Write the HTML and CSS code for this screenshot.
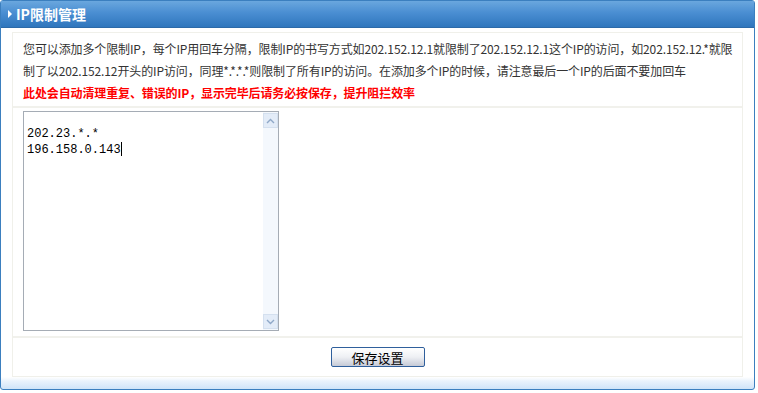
FILE: index.html
```html
<!DOCTYPE html>
<html lang="zh-CN">
<head>
    <meta charset="UTF-8">
    <title>IP限制管理</title>
    <link rel="stylesheet" href="styles.css">
</head>
<body>
    <div class="panel">
        <div class="panel-head"><span class="arrow"></span>IP限制管理</div>
        <div class="panel-body">
            <div class="form">
                <div class="row intro">
                    <p>您可以添加多个限制IP，每个IP用回车分隔，限制IP的书写方式如202.152.12.1就限制了202.152.12.1这个IP的访问，如202.152.12.*就限制了以202.152.12开头的IP访问，同理*.*.*.*则限制了所有IP的访问。在添加多个IP的时候，请注意最后一个IP的后面不要加回车</p>
                    <p class="warn">此处会自动清理重复、错误的IP，显示完毕后请务必按保存，提升阻拦效率</p>
                </div>
                <div class="row edit">
                    <div class="ip-box">
                        <div class="ip-text">
                            <br>202.23.*.*<br>196.158.0.143<span class="caret"></span>
                        </div>
                        <div class="scroll">
                            <span class="sbtn up"><svg width="9" height="6" viewBox="0 0 9 6"><path d="M1 5 L4.5 1.5 L8 5" fill="none" stroke="#8fa8c8" stroke-width="1.4"/></svg></span>
                            <span class="sbtn down"><svg width="9" height="6" viewBox="0 0 9 6"><path d="M1 1 L4.5 4.5 L8 1" fill="none" stroke="#8fa8c8" stroke-width="1.4"/></svg></span>
                        </div>
                    </div>
                </div>
                <div class="row actions">
                    <button type="button" class="save">保存设置</button>
                </div>
            </div>
        </div>
    </div>
</body>
</html>
```

FILE: styles.css
```css
body {
    margin: 0;
    padding: 0;
    background: #fff;
    font-family: "Noto Sans CJK SC", "Liberation Sans", sans-serif;
    font-size: 12px;
    color: #333;
}

.panel {
    width: 753px;
    height: 388px;
    border: 1px solid #3b7fbf;
    border-radius: 3px;
    display: flex;
    flex-direction: column;
    background: linear-gradient(to bottom, #fff 0, #fff 376px, #eaf3fc 380px, #cfe4f8 100%);
}

.panel-head {
    height: 26px;
    line-height: 25px;
    padding-left: 7px;
    color: #fff;
    font-weight: bold;
    font-size: 14px;
    background: linear-gradient(to bottom, #6aa7de 0, #4a8ed2 45%, #2f76bd 100%);
    border-bottom: 1px solid #2c6aa8;
    display: flex;
    align-items: center;
}

.arrow {
    width: 0;
    height: 0;
    border-top: 4px solid transparent;
    border-bottom: 4px solid transparent;
    border-left: 4px solid #fff;
    margin-right: 4px;
}

.panel-body {
    padding: 4px 11px 0 11px;
}

.form {
    border: 1px solid #f0f0ea;
    background: #fff;
}

.row {
    border-bottom: 2px solid #f1f1ec;
}

.row:last-child {
    border-bottom: none;
}

.intro {
    padding: 5px 2px 2px 10px;
    line-height: 22px;
    height: 66px;
    letter-spacing: -0.12px;
}

.intro p {
    margin: 0;
}

.warn {
    color: #f00;
    font-weight: bold;
}

.edit {
    padding: 3px 10px 5px 10px;
}

.ip-box {
    width: 254px;
    height: 218px;
    border: 1px solid #a5acb5;
    display: flex;
}

.ip-text {
    flex: 1;
    padding: 0 3px;
    font-family: "Liberation Mono", "DejaVu Sans Mono", monospace;
    font-size: 12px;
    line-height: 15px;
    color: #000;
}

.caret {
    display: inline-block;
    width: 1px;
    height: 14px;
    background: #000;
    vertical-align: -3px;
}

.scroll {
    width: 15px;
    background: #f4f8fd;
    display: flex;
    flex-direction: column;
    justify-content: space-between;
    padding: 1px 0;
}

.sbtn {
    height: 15px;
    background: #e3ecf8;
    border: 1px solid #d4e0ef;
    box-sizing: border-box;
    display: flex;
    align-items: center;
    justify-content: center;
}

.actions {
    height: 38px;
    display: flex;
    align-items: center;
    justify-content: center;
}

.save {
    width: 94px;
    height: 20px;
    padding: 0;
    font-family: "Noto Sans CJK SC", sans-serif;
    font-size: 13px;
    color: #000;
    border: 1px solid #2f5f9c;
    border-radius: 2px;
    background: linear-gradient(to bottom, #fff 0, #eef0f4 50%, #c6cad6 100%);
}
```
